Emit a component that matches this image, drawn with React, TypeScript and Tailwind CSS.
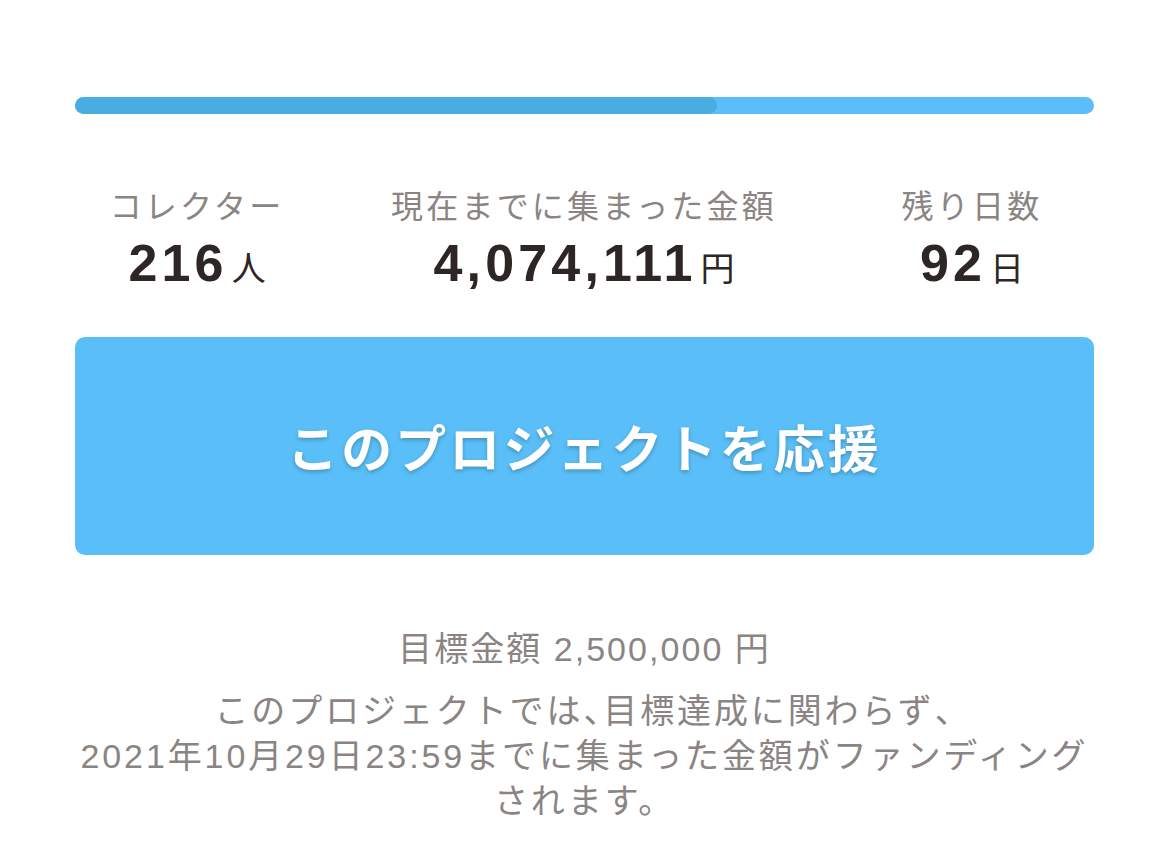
import React from "react";

const jp = { fontFamily: '"Liberation Sans", "Noto Sans CJK JP", sans-serif' };
const jpBold = { fontFamily: '"Noto Sans CJK JP", sans-serif' };
const num = { fontFamily: '"Liberation Sans", Arial, sans-serif' };

function Stat({ label, value, unit }: { label: string; value: string; unit: string }) {
  return (
    <div className="flex flex-col items-center">
      <div className="text-[32px] leading-[44px] tracking-[0.1em] text-[#8a8483] whitespace-nowrap" style={jp}>
        {label}
      </div>
      <div className="mt-[6px] flex items-baseline leading-[56px] text-[#2e2624] whitespace-nowrap">
        <span className="text-[52px] font-bold tracking-[0.08em]" style={num}>{value}</span>
        <span className="ml-[4px] text-[34px]" style={jpBold}>{unit}</span>
      </div>
    </div>
  );
}

const Comma = () => <span className="[font-feature-settings:'halt']">、</span>;

export default function App() {
  return (
    <div className="w-[1169px] h-[864px] bg-white overflow-hidden">
      <div className="mx-[75px] pt-[97px]">
        <div className="h-[17px] rounded-full bg-[#5bbef8] overflow-hidden">
          <div className="h-full w-[63%] rounded-full bg-[#4aade2]" />
        </div>

        <div className="mt-[71px] grid grid-cols-[244px_530px_246px]">
          <Stat label="コレクター" value="216" unit="人" />
          <Stat label="現在までに集まった金額" value="4,074,111" unit="円" />
          <Stat label="残り日数" value="92" unit="日" />
        </div>

        <button className="mt-[42px] w-full h-[218px] rounded-[10px] bg-[#5abff8] flex items-center justify-center">
          <span
            className="text-white font-bold text-[51px] tracking-[0.06em] [text-shadow:0_2px_4px_rgba(0,0,0,0.25)]"
            style={jpBold}
          >
            このプロジェクトを応援
          </span>
        </button>

        <div className="mt-[72px] text-center text-[#8a8483]" style={jp}>
          <div className="text-[34px] leading-[45px] tracking-[0.06em]">目標金額 2,500,000 円</div>
          <div className="mt-[17px] text-[34px] leading-[45px] tracking-[0.085em] whitespace-nowrap">
            このプロジェクトでは<Comma />目標達成に関わらず<Comma />
            <br />
            2021年10月29日23:59までに集まった金額がファンディング
            <br />
            されます。
          </div>
        </div>
      </div>
    </div>
  );
}
